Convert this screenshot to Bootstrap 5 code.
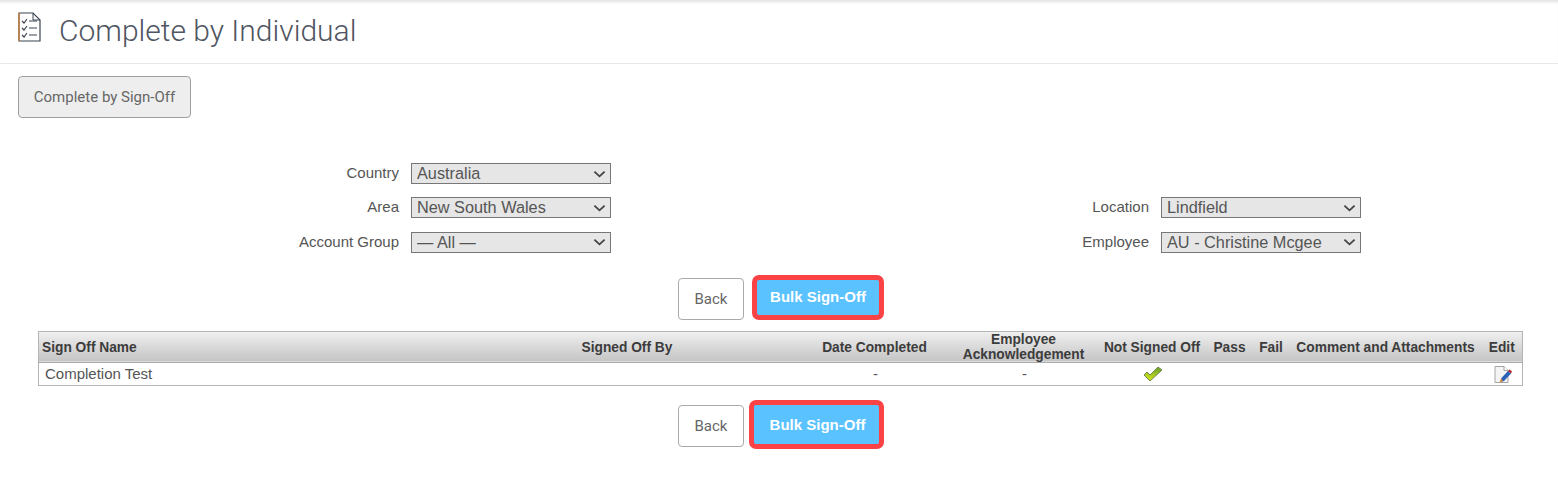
<!DOCTYPE html>
<html lang="en">
<head>
    <meta charset="UTF-8">
    <meta name="viewport" content="width=device-width, initial-scale=1.0">
    <title>Complete by Individual</title>
    <link href="https://cdn.jsdelivr.net/npm/bootstrap@5.3.0/dist/css/bootstrap.min.css" rel="stylesheet" />
    <style>
        body {
            background-color: #fff;
            color: #555;
            font-family: "Liberation Sans", Arial, sans-serif;
            font-size: 15px;
        }
        .page-head {
            height: 64px;
            padding-left: 18px;
            border-bottom: 1px solid #e8e8e8;
            box-shadow: inset 0 4px 3px -2px #e2e2e2;
        }
        .page-head h1 {
            margin: -2px 0 0 18px;
            font-family: Roboto, sans-serif;
            font-weight: 300;
            font-size: 30px;
            color: #4f5562;
        }
        .page-icon {
            margin-top: -9px;
        }
        .switch-btn {
            height: 42px;
            width: 173px;
            margin: 12px 0 0 18px;
            padding: 0;
            font-family: Roboto, sans-serif;
            font-size: 15px;
            color: #666;
            background-color: #eee;
            border: 1px solid #a0a0a0;
            border-radius: 4px;
        }
        .filter-grid {
            display: grid;
            grid-template-columns: 381px 200px 526px 200px;
            column-gap: 12px;
            row-gap: 13.4px;
            margin: 45px 0 0 18px;
            align-items: center;
        }
        .filter-grid label {
            text-align: right;
            font-size: 15px;
            line-height: 19px;
            padding-bottom: 2px;
        }
        .filter-grid select {
            width: 200px;
            height: 21px;
            padding: 0 0 0 5px;
            appearance: none;
            font-family: "Liberation Sans", Arial, sans-serif;
            font-size: 16.3px;
            line-height: 19px;
            color: #555;
            background: #e6e6e6 url("data:image/svg+xml,%3csvg xmlns='http://www.w3.org/2000/svg' viewBox='0 0 14 8'%3e%3cpath d='M1.500 1.500l5.500 5 5.500-5' fill='none' stroke='%23444' stroke-width='2'/%3e%3c/svg%3e") no-repeat right 4px center / 13px 8px;
            border: 1px solid #777;
            border-radius: 0;
        }
        .action-row {
            padding-left: 678px;
            gap: 8px;
        }
        .back-btn {
            width: 66px;
            height: 42px;
            padding: 0;
            font-family: Roboto, sans-serif;
            font-size: 15px;
            color: #666;
            background: #fff;
            border: 1px solid #aaa;
            border-radius: 4px;
        }
        .bulk-btn {
            height: 45px;
            width: 132px;
            padding: 0;
            font-family: "Liberation Sans", Arial, sans-serif;
            font-weight: 700;
            font-size: 15px;
            color: #fff;
            background: #5ac2ff;
            border: 5px solid #fb4346;
            border-radius: 7px;
        }
        .bulk-wide {
            height: 49px;
            width: 135px;
            margin-left: -3px;
            padding-left: 2px;
        }
        .action-top {
            margin-top: 22px;
        }
        .action-bottom {
            margin-top: 14px;
        }
        .action-bottom .back-btn {
            margin-bottom: 2px;
        }
        .signoff-table {
            width: 1484px;
            margin: 11px 0 0 38px;
            table-layout: fixed;
            border-collapse: collapse;
            border: 1px solid #b5b5b5;
            font-size: 15px;
        }
        .signoff-table th {
            height: 31px;
            padding: 1px 0 0 3px;
            font-size: 13.75px;
            line-height: 15px;
            color: #3c3c3c;
            white-space: nowrap;
            background: linear-gradient(#f0f0f0, #c4c4c4);
            border-bottom: 1px solid #aaa;
        }
        .signoff-table th.two-line {
            padding-top: 0;
        }
        .signoff-table td {
            height: 22px;
            padding: 0 0 0 6px;
            color: #555;
        }
        .signoff-table .mid {
            padding-left: 0;
            text-align: center;
        }
        .signoff-table td.mid {
            padding-left: 2px;
        }
        .signoff-table svg {
            display: block;
            margin: 0 auto;
        }
    </style>
</head>
<body>
  <header class="page-head d-flex align-items-center">
    <svg class="page-icon" width="23" height="30" viewBox="0 0 23 30" fill="none">
      <path d="M1 1H15L22 8V29H1Z" stroke="#3b4552" stroke-width="1.2"/>
      <path d="M1 1V29" stroke="#c9803a" stroke-width="1.4"/>
      <path d="M15 1V8H22" stroke="#3b4552"/>
      <path d="M4 9l2 2 3-4M4 16l2 2 3-4M4 23l2 2 3-4" stroke="#3b4552" stroke-width="1.2"/>
      <path d="M11 9h8M11 16h8M11 23h8" stroke="#3b4552" stroke-width="1.2"/>
    </svg>
    <h1>Complete by Individual</h1>
  </header>

  <button type="button" class="btn switch-btn d-block">Complete by Sign-Off</button>

  <form class="filter-grid">
    <label for="country">Country</label>
    <select id="country"><option>Australia</option></select>
    <span></span><span></span>

    <label for="area">Area</label>
    <select id="area"><option>New South Wales</option></select>
    <label for="location">Location</label>
    <select id="location"><option>Lindfield</option></select>

    <label for="group">Account Group</label>
    <select id="group"><option>— All —</option></select>
    <label for="employee">Employee</label>
    <select id="employee"><option>AU - Christine Mcgee</option></select>
  </form>

  <div class="action-row action-top d-flex align-items-end">
    <button type="button" class="btn back-btn">Back</button>
    <button type="button" class="btn bulk-btn">Bulk Sign-Off</button>
  </div>

  <table class="signoff-table">
    <colgroup>
      <col style="width:540px"><col style="width:221px"><col style="width:150px"><col style="width:148px">
      <col style="width:109px"><col style="width:46px"><col style="width:37px"><col style="width:192px"><col style="width:41px">
    </colgroup>
    <thead>
      <tr>
        <th>Sign Off Name</th>
        <th>Signed Off By</th>
        <th class="mid">Date Completed</th>
        <th class="mid two-line">Employee<br>Acknowledgement</th>
        <th class="mid">Not Signed Off</th>
        <th class="mid">Pass</th>
        <th class="mid">Fail</th>
        <th class="mid">Comment and Attachments</th>
        <th class="mid">Edit</th>
      </tr>
    </thead>
    <tbody>
      <tr>
        <td>Completion Test</td>
        <td></td>
        <td class="mid">-</td>
        <td class="mid">-</td>
        <td class="mid">
          <svg width="20" height="16" viewBox="0 0 20 16">
            <defs>
              <linearGradient id="tickFill" x1="0.7" y1="0" x2="0.3" y2="1">
                <stop offset="0" stop-color="#6fa02c"/>
                <stop offset="1" stop-color="#d8e81c"/>
              </linearGradient>
            </defs>
            <path d="M1 9l3-3 3 3 8-8 4 3-12 11Z" fill="url(#tickFill)" stroke="#6f8a4a"/>
          </svg>
        </td>
        <td></td>
        <td></td>
        <td></td>
        <td class="mid">
          <svg width="20" height="19" viewBox="0 0 20 19">
            <path d="M2 1.500H11L15 5.500V17.500H2Z" fill="#f4f4f4" stroke="#a5a5a5"/>
            <path d="M11 1.500V5.500H15" fill="#fff" stroke="#a5a5a5"/>
            <path d="M8 13.500L15 6l3 2.500-7 7.500-3 1Z" fill="#2a62b8"/>
            <path d="M15 6l1.500-1.500 2.500 2-1 2Z" fill="#b8202c"/>
            <path d="M8 13.500l-1.500 4 3.500-1.500Z" fill="#e08a30"/>
          </svg>
        </td>
      </tr>
    </tbody>
  </table>

  <div class="action-row action-bottom d-flex align-items-end">
    <button type="button" class="btn back-btn">Back</button>
    <button type="button" class="btn bulk-btn bulk-wide">Bulk Sign-Off</button>
  </div>

  <script src="https://cdn.jsdelivr.net/npm/bootstrap@5.3.0/dist/js/bootstrap.bundle.min.js"></script>
</body>
</html>
